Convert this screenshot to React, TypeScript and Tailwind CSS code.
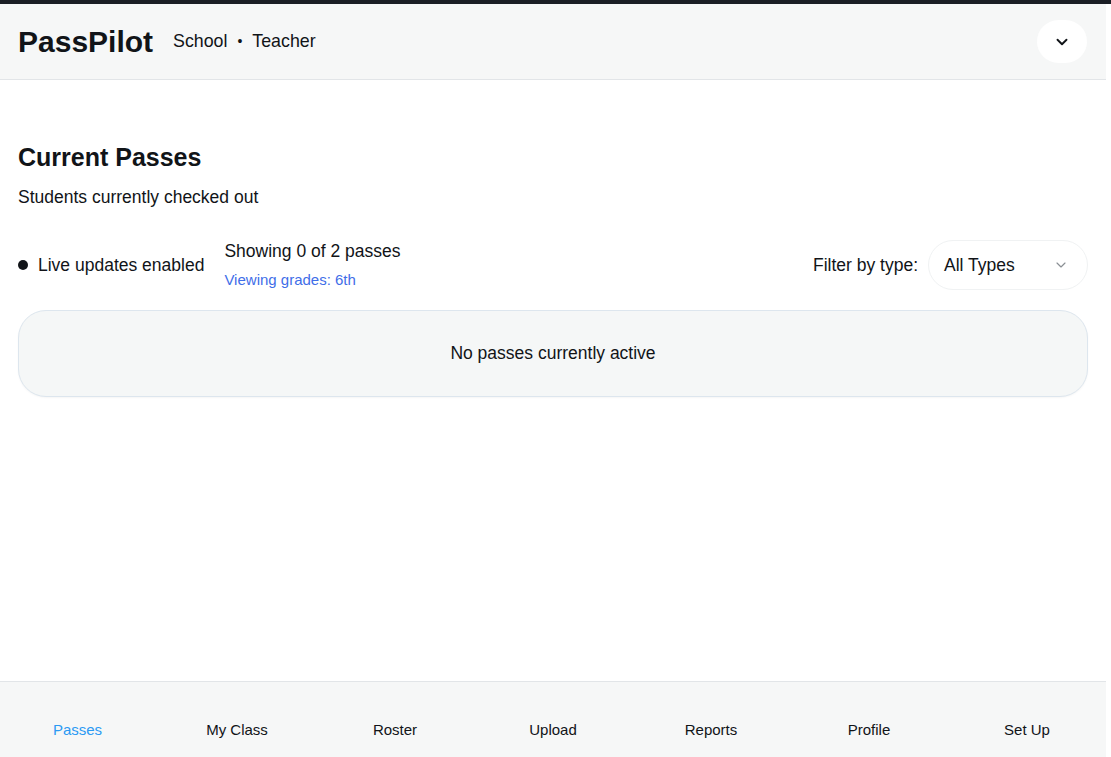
import { ChevronDown } from 'lucide-react';

const navItems = ['Passes', 'My Class', 'Roster', 'Upload', 'Reports', 'Profile', 'Set Up'];

export default function App() {
  return (
    <div className="h-[757px] w-full flex flex-col bg-white text-[#111418] font-['Liberation_Sans',Arial,sans-serif] overflow-hidden">
      <div className="h-[4px] bg-[#1b1e25] shrink-0" />
      <div className="flex-1 flex min-h-0">
        <div className="flex-1 flex flex-col min-w-0">
          {/* header */}
          <header className="h-[76px] shrink-0 bg-[#f6f7f7] border-b border-[#e2e5e8] flex items-center px-[18px]">
            <h1 className="text-[30px] font-bold leading-none">PassPilot</h1>
            <div className="ml-[20px] flex items-center text-[17.8px] gap-[10px]">
              <span>School</span>
              <span className="text-[14px]">•</span>
              <span>Teacher</span>
            </div>
            <button className="ml-auto mr-[1px] w-[50px] h-[43px] rounded-full bg-white flex items-center justify-center">
              <ChevronDown size={18} strokeWidth={2.5} className="text-[#111418]" />
            </button>
          </header>

          {/* main */}
          <main className="flex-1 px-[18px] pt-[62px]">
            <h2 className="text-[25px] font-bold leading-[30px]">Current Passes</h2>
            <p className="mt-[13px] text-[17.5px] leading-[24px]">Students currently checked out</p>

            <div className="mt-[31px] flex items-center h-[50px]">
              <div className="flex items-center gap-[10px]">
                <span className="w-[10px] h-[10px] rounded-full bg-[#111418]" />
                <span className="text-[17.5px]">Live updates enabled</span>
              </div>
              <div className="ml-[20px] flex flex-col">
                <span className="text-[17.5px] leading-[22px] -mt-[1px]">Showing 0 of 2 passes</span>
                <span className="text-[15px] leading-[18px] mt-[9px] text-[#3f6ee8]">Viewing grades: 6th</span>
              </div>
              <div className="ml-auto flex items-center">
                <span className="text-[17.5px] mr-[10px]">Filter by type:</span>
                <div className="w-[160px] h-[50px] rounded-full bg-white border border-[#f0f2f3] flex items-center pl-[15px] pr-[18px]">
                  <span className="text-[17.5px]">All Types</span>
                  <ChevronDown size={16} strokeWidth={1.75} className="ml-auto text-[#8a8f94]" />
                </div>
              </div>
            </div>

            <div className="mt-[20px] h-[87px] rounded-[28px] bg-[#f5f7f7] border border-[#dde6ee] shadow-[0_1px_2px_rgba(0,0,0,0.04)] flex items-center justify-center">
              <span className="text-[17.5px]">No passes currently active</span>
            </div>
          </main>

          {/* bottom nav */}
          <nav className="h-[76px] shrink-0 bg-[#f6f7f7] border-t border-[#e2e5e8] grid grid-cols-7 items-end pb-[16px]">
            {navItems.map((item, i) => (
              <span
                key={item}
                className={
                  i === 0
                    ? 'text-center text-[15px] text-[#2b9af3] -ml-[3px]'
                    : 'text-center text-[15px] text-[#111418]'
                }
              >
                {item}
              </span>
            ))}
          </nav>
        </div>
        <div className="w-[5px] shrink-0 bg-white" />
      </div>
    </div>
  );
}
